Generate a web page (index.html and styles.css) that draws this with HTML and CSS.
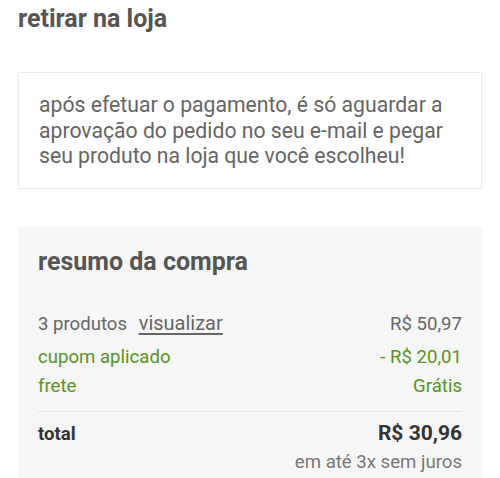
FILE: index.html
```html
<!DOCTYPE html>
<html lang="pt-BR">
<head>
<meta charset="utf-8">
<title>retirar na loja</title>
<link rel="stylesheet" href="styles.css">
</head>
<body>
<main class="page">
  <h1 class="title">retirar na loja</h1>
  <div class="notice">
    <p>após efetuar o pagamento, é só aguardar a aprovação do pedido no seu e-mail e pegar seu produto na loja que você escolheu!</p>
  </div>
  <section class="summary">
    <h2 class="summary-title">resumo da compra</h2>
    <div class="row first">
      <span class="label">3 produtos <a class="link" href="#">visualizar</a></span>
      <span class="value">R$ 50,97</span>
    </div>
    <div class="row green">
      <span class="label">cupom aplicado</span>
      <span class="value">- R$ 20,01</span>
    </div>
    <div class="row green">
      <span class="label">frete</span>
      <span class="value">Grátis</span>
    </div>
    <hr class="divider">
    <div class="total-row">
      <span class="total-label">total</span>
      <span class="total-value">R$ 30,96</span>
    </div>
    <div class="installments">em até 3x sem juros</div>
  </section>
</main>
</body>
</html>
```
FILE: styles.css
```css
* { box-sizing: border-box; }
html, body { margin: 0; padding: 0; background: #fff; }
body {
  font-family: Roboto, "Liberation Sans", sans-serif;
  color: #666;
  width: 500px;
  height: 478px;
  overflow: hidden;
}
.page { padding: 0 18px; }
.title {
  margin: 0;
  padding-top: 5px;
  font-size: 25px;
  line-height: 28px;
  font-weight: 700;
  color: #555;
}
.notice {
  margin-top: 39px;
  border: 1px solid #ebebeb;
  padding: 19px 20px 19px;
}
.notice p {
  margin: 0;
  font-size: 21.2px;
  line-height: 25.5px;
  color: #656565;
}
.summary {
  margin-top: 38px;
  background: #f6f6f6;
  padding: 20px 20px 20px;
  min-height: 260px;
}
.summary-title {
  margin: 0 0 32px;
  font-size: 25px;
  line-height: 30px;
  font-weight: 700;
  color: #555;
}
.row {
  display: flex;
  justify-content: space-between;
  align-items: baseline;
  font-size: 18.6px;
  line-height: 29px;
  color: #666;
}
.row.first { margin-bottom: 4px; }
.row.green { color: #5a9222; }
.link {
  font-size: 20px;
  color: #666;
  text-decoration: underline;
  text-underline-offset: 3px;
  margin-left: 7px;
}
.divider {
  margin: 10px 0 0;
  border: 0;
  border-top: 1px solid #e4e4e4;
}
.total-row {
  display: flex;
  justify-content: space-between;
  align-items: baseline;
  padding-top: 6px;
  line-height: 30px;
}
.total-label { font-size: 18.6px; font-weight: 700; color: #333; }
.total-value { font-size: 21px; font-weight: 700; color: #333; }
.installments {
  text-align: right;
  font-size: 18.6px;
  line-height: 26px;
  color: #777;
}
```
